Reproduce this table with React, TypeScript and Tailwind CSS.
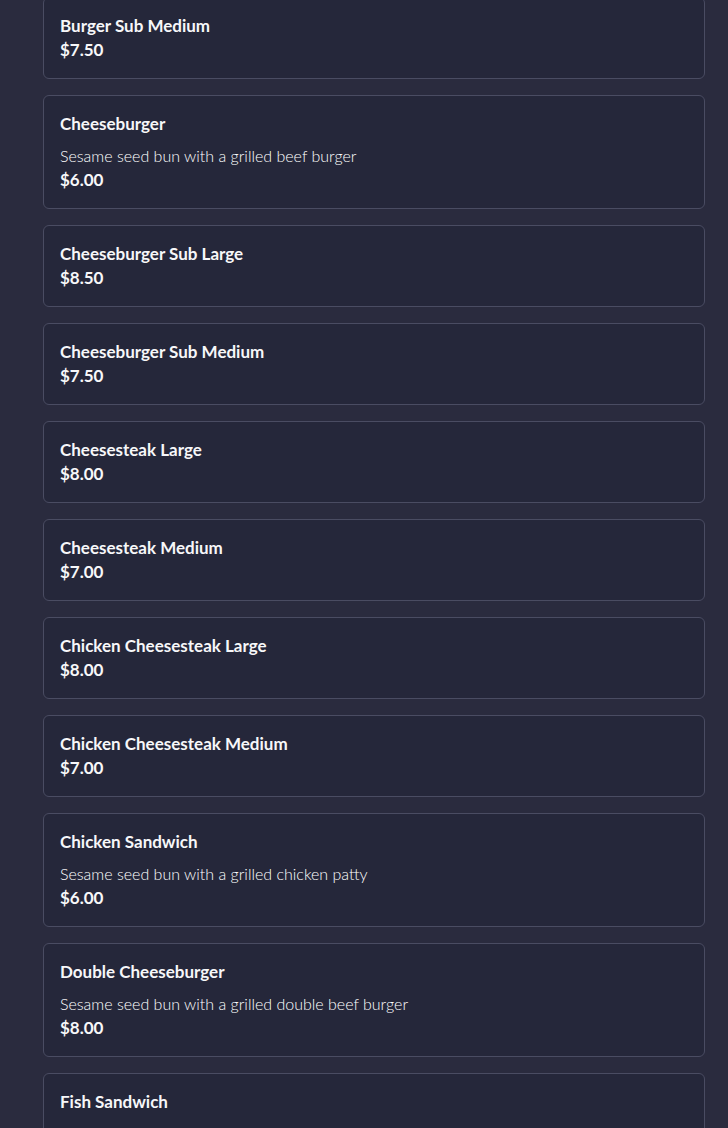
const items = [
  { name: "Burger Sub Medium", price: "$7.50" },
  { name: "Cheeseburger", desc: "Sesame seed bun with a grilled beef burger", price: "$6.00" },
  { name: "Cheeseburger Sub Large", price: "$8.50" },
  { name: "Cheeseburger Sub Medium", price: "$7.50" },
  { name: "Cheesesteak Large", price: "$8.00" },
  { name: "Cheesesteak Medium", price: "$7.00" },
  { name: "Chicken Cheesesteak Large", price: "$8.00" },
  { name: "Chicken Cheesesteak Medium", price: "$7.00" },
  { name: "Chicken Sandwich", desc: "Sesame seed bun with a grilled chicken patty", price: "$6.00" },
  { name: "Double Cheeseburger", desc: "Sesame seed bun with a grilled double beef burger", price: "$8.00" },
  { name: "Fish Sandwich", desc: "Sesame seed bun with a fried fish patty", price: "$6.00" },
];

export default function App() {
  return (
    <div className="h-[1128px] overflow-hidden bg-[#2a2b3e] font-['Lato',sans-serif] text-[#f7f7f9]">
      <div className="-mt-[3px] pl-[43px] pr-[23px]">
        {items.map((item) => (
          <div
            key={item.name}
            className="mb-4 rounded-md border border-[#4a4c62] bg-[#25273a] p-4"
          >
            <div className="text-[17px] leading-[23px] pb-px font-bold">{item.name}</div>
            {item.desc && (
              <div className="mt-2 text-base leading-[23px] pb-px font-light text-white">{item.desc}</div>
            )}
            <div className="text-[17px] leading-[23px] pb-px font-bold">{item.price}</div>
          </div>
        ))}
      </div>
    </div>
  );
}
